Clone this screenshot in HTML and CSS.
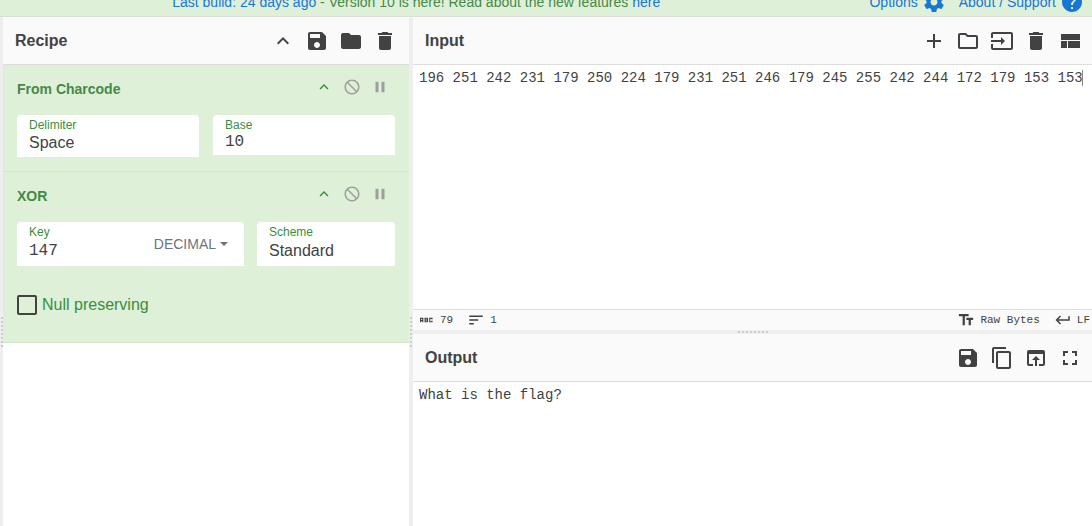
FILE: index.html
```html
<!DOCTYPE html>
<html lang="en">
<head>
<meta charset="utf-8">
<title>CyberChef</title>
<link rel="stylesheet" href="styles.css">
</head>
<body>
<svg class="sprite" aria-hidden="true">
  <symbol id="less" viewBox="0 0 24 24"><path d="M12 8l-6 6 1.41 1.41L12 10.83l4.59 4.58L18 14z"/></symbol>
  <symbol id="save" viewBox="0 0 24 24"><path d="M17 3H5c-1.11 0-2 .9-2 2v14c0 1.1.89 2 2 2h14c1.1 0 2-.9 2-2V7l-4-4zm-5 16c-1.66 0-3-1.34-3-3s1.34-3 3-3 3 1.34 3 3-1.34 3-3 3zm3-10H5V5h10v4z"/></symbol>
  <symbol id="folder" viewBox="0 0 24 24"><path d="M10 4H4c-1.1 0-1.99.9-1.99 2L2 18c0 1.1.9 2 2 2h16c1.1 0 2-.9 2-2V8c0-1.1-.9-2-2-2h-8l-2-2z"/></symbol>
  <symbol id="folder-open" viewBox="0 0 24 24"><path d="M9.17 6l2 2H20v10H4V6h5.17M10 4H4c-1.1 0-1.99.9-1.99 2L2 18c0 1.1.9 2 2 2h16c1.1 0 2-.9 2-2V8c0-1.1-.9-2-2-2h-8l-2-2z"/></symbol>
  <symbol id="delete" viewBox="0 0 24 24"><path d="M6 19c0 1.1.9 2 2 2h8c1.1 0 2-.9 2-2V7H6v12zM19 4h-3.5l-1-1h-5l-1 1H5v2h14V4z"/></symbol>
  <symbol id="add" viewBox="0 0 24 24"><path d="M19 13h-6v6h-2v-6H5v-2h6V5h2v6h6v2z"/></symbol>
  <symbol id="input-icon" viewBox="0 0 24 24"><path d="M21 3.01H3c-1.1 0-2 .9-2 2V9h2V4.99h18v14.03H3V15H1v4.01c0 1.1.9 1.98 2 1.98h18c1.1 0 2-.88 2-1.98v-14c0-1.11-.9-2-2-2zM11 16l4-4-4-4v3H1v2h10v3z"/></symbol>
  <symbol id="layout" viewBox="0 0 24 24"><path d="M3 5h19v6H3zM3 12h6v7H3zM10 12h12v7H10z"/></symbol>
  <symbol id="block" viewBox="0 0 24 24"><path d="M12 2C6.48 2 2 6.48 2 12s4.48 10 10 10 10-4.480 10-10S17.520 2 12 2zM4 12c0-1.850.63-3.550 1.690-4.900L16.900 18.310C15.550 19.370 13.850 20 12 20c-4.420 0-8-3.580-8-8zm14.310 4.900L7.100 5.690C8.450 4.630 10.150 4 12 4c4.420 0 8 3.580 8 8 0 1.850-.63 3.550-1.690 4.900z"/></symbol>
  <symbol id="pause" viewBox="0 0 24 24"><path d="M6 19h4V5H6v14zm8-14v14h4V5h-4z"/></symbol>
  <symbol id="settings" viewBox="0 0 24 24"><path d="M19.430 12.980c.04-.32.07-.64.07-.98s-.03-.66-.07-.98l2.110-1.650c.19-.15.24-.42.12-.64l-2-3.460c-.12-.22-.39-.3-.61-.22l-2.490 1c-.52-.4-1.080-.73-1.690-.98l-.38-2.650C14.460 2.180 14.250 2 14 2h-4c-.25 0-.46.18-.49.42l-.38 2.650c-.61.25-1.170.59-1.690.98l-2.490-1c-.23-.09-.49 0-.61.22l-2 3.460c-.13.22-.07.49.12.64l2.110 1.650c-.04.32-.07.65-.07.98s.03.66.07.98l-2.110 1.650c-.19.15-.24.42-.12.64l2 3.460c.12.22.39.3.61.22l2.490-1c.52.4 1.080.73 1.690.98l.38 2.650c.03.24.24.42.49.42h4c.25 0 .46-.18.49-.42l.38-2.650c.61-.25 1.170-.59 1.690-.98l2.490 1c.23.09.49 0 .61-.22l2-3.460c.12-.22.07-.49-.12-.64l-2.110-1.650zM12 15.500c-1.930 0-3.500-1.570-3.500-3.500s1.570-3.500 3.500-3.500 3.500 1.570 3.500 3.500-1.570 3.500-3.500 3.500z"/></symbol>
  <symbol id="help" viewBox="0 0 24 24"><path d="M12 2C6.480 2 2 6.480 2 12s4.480 10 10 10 10-4.480 10-10S17.520 2 12 2zm1 17h-2v-2h2v2zm2.070-7.750l-.9.92C13.450 12.900 13 13.500 13 15h-2v-.5c0-1.100.45-2.100 1.170-2.830l1.240-1.260c.37-.36.59-.86.59-1.410 0-1.100-.9-2-2-2s-2 .9-2 2H8c0-2.210 1.790-4 4-4s4 1.790 4 4c0 .88-.36 1.680-.93 2.250z"/></symbol>
  <symbol id="copy" viewBox="0 0 24 24"><path d="M16 1H4c-1.100 0-2 .9-2 2v14h2V3h12V1zm3 4H8c-1.100 0-2 .9-2 2v14c0 1.100.9 2 2 2h11c1.100 0 2-.9 2-2V7c0-1.100-.9-2-2-2zm0 16H8V7h11v14z"/></symbol>
  <symbol id="open" viewBox="0 0 24 24"><path d="M19 4H5c-1.110 0-2 .9-2 2v12c0 1.100.89 2 2 2h4v-2H5V8h14v10h-4v2h4c1.100 0 2-.9 2-2V6c0-1.100-.89-2-2-2zm-7 6l-4 4h3v6h2v-6h3l-4-4z"/></symbol>
  <symbol id="full" viewBox="0 0 24 24"><path d="M7 14H5v5h5v-2H7v-3zm-2-4h2V7h3V5H5v5zm12 7h-3v2h5v-5h-2v3zM14 5v2h3v3h2V5h-5z"/></symbol>
  <symbol id="abc" viewBox="0 0 24 24"><path fill-rule="evenodd" d="M4 9h4.500v6H7v-1.500H5.500V15H4zM5.500 10.500v1.500H7v-1.500zM10 9h4l.8.800v1.700l-.5.5.5.5v1.700l-.8.800h-4zM11.500 10.400v1h1.800v-1zM11.500 12.600v1h1.800v-1zM16.300 9h4.500v2h-1.500v-.5h-1.500v3h1.500V13h1.500v2h-4.500z"/></symbol>
  <symbol id="sort" viewBox="0 0 24 24"><path d="M3 18h6v-2H3v2zM3 6v2h18V6H3zm0 7h12v-2H3v2z"/></symbol>
  <symbol id="text" viewBox="0 0 24 24"><path d="M2.500 4v3h5v12h3V7h5V4h-13zm19 5h-9v3h3v7h3v-7h3V9z"/></symbol>
  <symbol id="return" viewBox="0 0 24 24"><path d="M19 7v4H5.830l3.580-3.590L8 6l-6 6 6 6 1.410-1.410L5.830 13H21V7z"/></symbol>
</svg>

<header class="banner">
  <p class="notice"><a href="#">Last build: 24 days ago</a> - Version 10 is here! Read about the new features <a href="#">here</a></p>
  <nav class="banner-links">
    <a href="#">Options <svg class="icon"><use href="#settings"/></svg></a>
    <a href="#">About / Support <svg class="icon"><use href="#help"/></svg></a>
  </nav>
</header>

<main class="workspace">
  <div class="gutter gutter-v"></div>
  <section class="pane">
    <div class="title-bar">
      <h2>Recipe</h2>
      <div class="tools">
        <button aria-label="Hide arguments"><svg class="icon"><use href="#less"/></svg></button>
        <button aria-label="Save recipe"><svg class="icon"><use href="#save"/></svg></button>
        <button aria-label="Load recipe"><svg class="icon"><use href="#folder"/></svg></button>
        <button aria-label="Clear recipe"><svg class="icon"><use href="#delete"/></svg></button>
      </div>
    </div>
    <ul class="operations">
      <li class="operation">
        <div class="op-head">
          <h3>From Charcode</h3>
          <div class="op-tools">
            <button class="active" aria-label="Hide arguments"><svg class="icon small"><use href="#less"/></svg></button>
            <button aria-label="Disable operation"><svg class="icon small"><use href="#block"/></svg></button>
            <button aria-label="Set breakpoint"><svg class="icon small"><use href="#pause"/></svg></button>
          </div>
        </div>
        <div class="fields">
          <div class="field field-select">
            <label for="delimiter">Delimiter</label>
            <select id="delimiter"><option>Space</option></select>
          </div>
          <div class="field">
            <label for="base">Base</label>
            <input id="base" type="text" value="10">
          </div>
        </div>
      </li>
      <li class="operation">
        <div class="op-head">
          <h3>XOR</h3>
          <div class="op-tools">
            <button class="active" aria-label="Hide arguments"><svg class="icon small"><use href="#less"/></svg></button>
            <button aria-label="Disable operation"><svg class="icon small"><use href="#block"/></svg></button>
            <button aria-label="Set breakpoint"><svg class="icon small"><use href="#pause"/></svg></button>
          </div>
        </div>
        <div class="fields fields-key">
          <div class="field field-toggle">
            <div class="toggle-text">
              <label for="key">Key</label>
              <input id="key" type="text" value="147">
            </div>
            <button class="toggle">DECIMAL</button>
          </div>
          <div class="field field-select">
            <label for="scheme">Scheme</label>
            <select id="scheme"><option>Standard</option></select>
          </div>
        </div>
        <label class="check"><input type="checkbox"> Null preserving</label>
      </li>
    </ul>
  </section>
  <div class="gutter gutter-v"></div>
  <div class="io">
    <section class="pane">
      <div class="title-bar">
        <h2>Input</h2>
        <div class="tools">
          <button aria-label="Add input tab"><svg class="icon"><use href="#add"/></svg></button>
          <button aria-label="Open folder"><svg class="icon"><use href="#folder-open"/></svg></button>
          <button aria-label="Open file"><svg class="icon"><use href="#input-icon"/></svg></button>
          <button aria-label="Clear input"><svg class="icon"><use href="#delete"/></svg></button>
          <button aria-label="Reset layout"><svg class="icon"><use href="#layout"/></svg></button>
        </div>
      </div>
      <div class="editor">
        <textarea aria-label="Input" spellcheck="false">196 251 242 231 179 250 224 179 231 251 246 179 245 255 242 244 172 179 153 153</textarea>
        <span class="caret"></span>
      </div>
      <div class="status">
        <span><svg class="icon small"><use href="#abc"/></svg>79</span>
        <span><svg class="icon small"><use href="#sort"/></svg>1</span>
        <button class="encoding"><svg class="icon small"><use href="#text"/></svg>Raw Bytes</button>
        <button><svg class="icon small"><use href="#return"/></svg>LF</button>
      </div>
    </section>
    <div class="gutter gutter-h"></div>
    <section class="pane">
      <div class="title-bar">
        <h2>Output</h2>
        <div class="tools">
          <button aria-label="Save output"><svg class="icon"><use href="#save"/></svg></button>
          <button aria-label="Copy output"><svg class="icon"><use href="#copy"/></svg></button>
          <button aria-label="Move output to input"><svg class="icon"><use href="#open"/></svg></button>
          <button aria-label="Maximise output"><svg class="icon"><use href="#full"/></svg></button>
        </div>
      </div>
      <div class="editor">
        <textarea aria-label="Output" readonly>What is the flag?</textarea>
      </div>
    </section>
  </div>
</main>
</body>
</html>
```

FILE: styles.css
```css
* { box-sizing: border-box; }

body {
  margin: 0;
  height: 100vh;
  display: flex;
  flex-direction: column;
  overflow: hidden;
  font: 14px/20px "Liberation Sans", Arial, sans-serif;
  color: #424242;
  background: #fff;
}

h2, h3, p, ul { margin: 0; padding: 0; }
ul { list-style: none; }
a { color: #1976d2; text-decoration: none; }

button, input, select, textarea {
  margin: 0;
  padding: 0;
  border: 0;
  outline: 0;
  background: transparent;
  color: inherit;
  font: inherit;
}

.sprite { position: absolute; width: 0; height: 0; }
.icon { display: block; flex: none; width: 24px; height: 24px; fill: currentColor; }
.icon.small { width: 18px; height: 18px; }

/* Banner */
.banner {
  flex: none;
  display: flex;
  align-items: flex-end;
  height: 17px;
  overflow: hidden;
  border-bottom: 1px solid #ddd;
  background: #dff0d8;
  color: #468847;
}
.notice { flex: 1; line-height: 28px; text-align: center; }
.banner-links { display: flex; gap: 13px; padding: 0 8px 0 37px; }
.banner-links a { display: flex; align-items: center; gap: 4px; height: 28px; }

/* Panes */
.workspace {
  flex: 1;
  min-height: 0;
  display: grid;
  grid-template-columns: 3px minmax(0, 406fr) 4px minmax(0, 679fr);
}
.gutter { display: flex; justify-content: center; overflow: hidden; background: #eee; }
.gutter::after { content: ""; flex: none; }
.gutter-v { padding-top: 300px; }
.gutter-v::after {
  width: 2px;
  height: 30px;
  background: repeating-linear-gradient(#ccc 0 2px, transparent 2px 4px);
}
.gutter-h { align-items: center; }
.gutter-h::after {
  width: 30px;
  height: 2px;
  background: repeating-linear-gradient(90deg, #ccc 0 2px, transparent 2px 4px);
}
.io { display: grid; grid-template-rows: minmax(0, 313fr) 4px minmax(0, 192fr); min-height: 0; }
.pane { display: flex; flex-direction: column; min-height: 0; }

.title-bar {
  flex: none;
  display: flex;
  align-items: center;
  justify-content: space-between;
  height: 48px;
  padding: 0 10px 0 12px;
  border-bottom: 1px solid #ddd;
  background: #fafafa;
}
.title-bar h2 { font-size: 16px; line-height: 25px; }
.tools { display: flex; gap: 10px; }
.workspace > .pane .title-bar { padding-right: 12px; }

/* Operations */
.operation {
  padding: 13px 14px 14px;
  border-bottom: 1px solid #d0e9c6;
  background: #dff0d8;
  color: #388e3c;
}
.op-head { display: flex; align-items: flex-start; justify-content: space-between; height: 37px; }
.op-head h3 { font-size: 14px; line-height: 22px; color: #468847; }
.op-tools { display: flex; gap: 10px; padding-right: 6px; color: #9e9e9e; }
.op-tools .active { color: #388e3c; }

.fields { display: grid; grid-template-columns: 1fr 1fr; align-items: start; gap: 14px; }
.field {
  min-width: 0;
  padding: 2px 12px 3px;
  border-radius: 4px 4px 0 0;
  background: #fff;
}
.field-select { padding-bottom: 4px; }
.field label { display: block; font-size: 12px; line-height: 16px; }
.field input, .field select { display: block; width: 100%; height: 19px; font-size: 16px; line-height: 19px; color: #424242; }
.field input { font-family: "Liberation Mono", monospace; }
.field select { appearance: none; height: 20px; line-height: 20px; }

.fields-key { grid-template-columns: 227fr 138fr; align-items: stretch; gap: 13px; }
.fields-key .field { padding-bottom: 4px; }
.fields-key .field-toggle { display: flex; align-items: center; }
.fields-key input, .fields-key select { height: 22px; line-height: 22px; }
.toggle-text { flex: 1; min-width: 0; }
.toggle { display: flex; align-items: center; gap: 4px; padding: 2px 4px 0 0; color: #6c757d; }
.toggle::after { content: ""; border: 4px solid transparent; border-top-color: currentColor; border-bottom: 0; }

.check { display: flex; align-items: center; gap: 5px; padding: 28px 0 12px; font-size: 16px; line-height: 22px; }
.check input { appearance: none; width: 20px; height: 20px; border: 2px solid #424242; border-radius: 2px; }

/* Editors */
.editor {
  position: relative;
  flex: 1;
  min-height: 0;
  font: 14px/18px "Liberation Mono", monospace;
  color: #424242;
}
.editor textarea { display: block; width: 100%; height: 100%; padding: 4px 6px; resize: none; overflow: hidden; }
.caret { position: absolute; top: 5px; left: calc(79ch + 5px); width: 1px; height: 16px; background: #888; }

.status {
  flex: none;
  display: flex;
  align-items: center;
  gap: 14px;
  height: 21px;
  padding: 0 2px 0 4px;
  border-top: 1px solid #ddd;
  background: #fafafa;
  font: 11px/20px "Liberation Mono", monospace;
}
.status span, .status button { display: flex; align-items: center; gap: 5px; }
.status .encoding { margin-left: auto; }
```
